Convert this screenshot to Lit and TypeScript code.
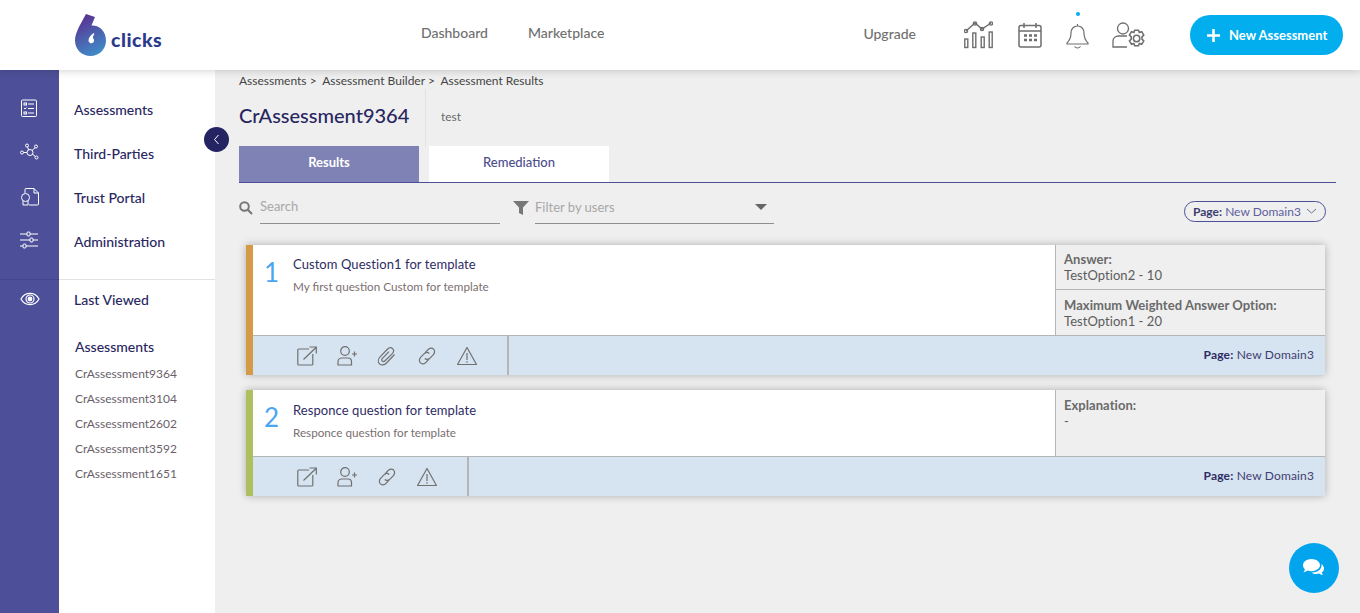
import { LitElement, html, css, svg } from 'lit';
import { customElement } from 'lit/decorators.js';

const ic = (w: number, h: number, body: unknown, sw = 1.2) => html`<svg width=${w} height=${h} viewBox="0 0 ${w} ${h}" fill="none" stroke="currentColor" stroke-width=${sw}>${body}</svg>`;

const ICONS = {
  open: ic(20, 20, svg`<path d="M12 3H1.800a1 1 0 0 0-1 1v14a1 1 0 0 0 1 1h13a1 1 0 0 0 1-1V8"/><path d="M6.500 13.500L19 1.500M12.500 1h6.800v6.500"/>`),
  user: ic(20, 20, svg`<circle cx="8" cy="5" r="4.300"/><path d="M1 19v-3.500c0-2 2-3.500 4-3.500h6c2 0 3.500 1.500 3.500 3.500V19z"/><path d="M15 8h5M17.500 5.500v5"/>`),
  clip: ic(20, 20, svg`<path d="M17.500 8.500L9.500 17c-2.200 2.300-5.300 2.500-7 .8s-1.500-4.800.6-7l7.500-7.800c1.500-1.500 3.700-1.700 5-.4s1.200 3.400-.3 5L8 14.800c-.8.800-2 .9-2.700.2s-.6-1.900.2-2.700l6.500-6.700"/>`),
  link: ic(20, 20, svg`<path d="M8 7l3-3.300c1.700-1.800 4.200-2 5.600-.6 1.500 1.500 1.300 4-.4 5.700l-3.200 3.300c-1.700 1.700-3.900 1.700-5.200.4"/><path d="M12 13l-3 3.300c-1.700 1.800-4.200 2-5.600.6-1.500-1.500-1.300-4 .4-5.700l3.200-3.300c1.700-1.700 3.900-1.700 5.200-.4"/>`),
  warn: ic(20, 20, svg`<path d="M10 1.500L19.500 18.500H.5z" stroke-linejoin="round"/><path d="M10 7v7M10 15.200v1.500"/>`),
};

const rail = [
  svg`<rect x="1.500" y="1" width="15" height="16.500" rx="1"/><rect x="4" y="4" width="2.500" height="2"/><path d="M8 5h6M4 9l1 1 1.500-1.500M8 9.500h6M8 14h6"/><rect x="4" y="13" width="2.500" height="2"/>`,
  svg`<circle cx="10" cy="9.500" r="3"/><circle cx="2" cy="9.500" r="1.500"/><circle cx="7" cy="2.500" r="1.500"/><circle cx="16" cy="3.500" r="1.500"/><circle cx="16.500" cy="14.500" r="1.500"/><path d="M3.500 9.500H7M7.500 4l1.200 3M15 4.700l-3 2.800M15.500 13.500l-3.200-2.300"/>`,
  svg`<path d="M5 6V2.500a1 1 0 0 1 1-1h8l4.500 4.500v11a1 1 0 0 1-1 1H9M14 1.500V6h4.500"/><circle cx="5.500" cy="10.500" r="4"/><path d="M3 14v4h5v-4"/>`,
  svg`<path d="M0 3h7M10 3h8M0 9h10M13 9h5M0 15h3M6 15h12"/><rect x="7" y="1" width="3" height="4" rx="1"/><rect x="10" y="7" width="3" height="4" rx="1"/><rect x="3" y="13" width="3" height="4" rx="1"/>`,
];

const RECENT = ['CrAssessment9364', 'CrAssessment3104', 'CrAssessment2602', 'CrAssessment3592', 'CrAssessment1651'];

interface Row { label: string; value: string }
interface Question {
  n: number; color: string; title: string; sub: string; tall: boolean;
  icons: (keyof typeof ICONS)[]; rows: Row[];
}

const QUESTIONS: Question[] = [
  {
    n: 1, color: '#d49a45', title: 'Custom Question1 for template', sub: 'My first question Custom for template', tall: true,
    icons: ['open', 'user', 'clip', 'link', 'warn'],
    rows: [
      { label: 'Answer:', value: 'TestOption2 - 10' },
      { label: 'Maximum Weighted Answer Option:', value: 'TestOption1 - 20' },
    ],
  },
  {
    n: 2, color: '#aebf5f', title: 'Responce question for template', sub: 'Responce question for template', tall: false,
    icons: ['open', 'user', 'link', 'warn'],
    rows: [{ label: 'Explanation:', value: '-' }],
  },
];

@customElement('app-root')
export class AppRoot extends LitElement {
  static styles = css`
    :host {
      display: block;
      height: 613px;
      overflow: hidden;
      position: relative;
      background: #efefef;
      font-family: Lato, sans-serif;
      color: #28265f;
    }
    .top {
      height: 70px;
      background: #fff;
      box-shadow: 0 1px 8px rgba(0, 0, 0, 0.18);
      display: flex;
      align-items: center;
      position: relative;
      z-index: 2;
    }
    .logo { margin-left: 75px; width: 346px; display: flex; align-items: center; gap: 4px; height: 44px; }
    .logo-word { font-size: 19.500px; font-weight: 900; color: #2c3a8c; margin-top: 9px; letter-spacing: 0.5px; }
    .top a { font-size: 14px; font-weight: 500; color: #6f6f6f; margin-bottom: 6px; }
    .top a.market { margin-left: 40px; }
    .top a.upgrade { margin-left: 259px; margin-bottom: 3px; }
    .top-icons { display: flex; align-items: center; margin-left: 48px; color: #6e6e6e; }
    .top-icons svg { display: block; }
    .gap-cal { width: 25px; }
    .gap-bell { width: 24px; }
    .gap-user { width: 23px; }
    .bell { position: relative; }
    .bell::before {
      content: '';
      position: absolute;
      left: 10px;
      top: -10px;
      width: 4px;
      height: 4px;
      border-radius: 50%;
      background: #03aeef;
    }
    .new {
      margin-left: 44px;
      width: 153px;
      height: 40px;
      border-radius: 20px;
      background: #03aeef;
      color: #fff;
      font-size: 13px;
      font-weight: 700;
      display: flex;
      align-items: center;
      padding-left: 17px;
      gap: 9px;
      box-sizing: border-box;
    }
    .body { display: flex; height: 543px; }
    .rail { width: 59px; background: #4d5098; color: #fff; flex: none; }
    .rail-item { height: 44px; display: flex; align-items: center; justify-content: center; }
    .rail-list { padding-top: 16px; }
    .rail-sep { height: 1px; background: #44468b; margin-top: 17px; }
    .rail-eye { height: 37px; }
    .nav { width: 156px; background: #fff; flex: none; position: relative; }
    .nav-list { padding-top: 18px; }
    .nav-item { height: 44px; line-height: 44px; padding-left: 15px; font-size: 14px; font-weight: 500; color: #28265f; }
    .nav-sep { height: 1px; background: #e2e2e2; margin-top: 15px; }
    .last { height: 39px; line-height: 39px; }
    .recent-head { padding-left: 16px; font-size: 14px; font-weight: 500; margin-top: 17px; line-height: 22px; }
    .recent { padding-left: 16px; font-size: 12px; color: #6b5f6b; line-height: 25px; padding-top: 3px; }
    .collapse {
      position: absolute;
      left: 145px;
      top: 57px;
      width: 25px;
      height: 25px;
      border-radius: 50%;
      background: #242463;
      color: #fff;
      display: flex;
      align-items: center;
      justify-content: center;
      z-index: 1;
    }
    .main { flex: 1; padding: 3px 24px 0 24px; min-width: 0; }
    .crumbs { font-size: 12px; line-height: 16px; color: #444; display: flex; gap: 2.500px; }
    .crumbs span { white-space: pre; }
    .head { display: flex; height: 57px; align-items: center; }
    .title { font-size: 20px; width: 186px; height: 57px; line-height: 53px; border-right: 1px solid #e2e2e2; color: #28265f; font-weight: 500; }
    .desc { font-size: 12px; color: #6a6a6a; padding-left: 15px; margin-bottom: 2px; }
    .tabs { display: flex; gap: 10px; border-bottom: 1px solid #4d5098; height: 36px; width: 1097px; }
    .tab { width: 180px; height: 36px; line-height: 33px; text-align: center; font-size: 13px; background: #fff; color: #4d4d8e; font-weight: 500; }
    .tab.on { background: #7f82b4; color: #fff; font-weight: 700; }
    .filters { display: flex; align-items: flex-start; height: 42px; width: 1087px; padding-top: 8px; }
    .search { display: flex; align-items: center; width: 261px; color: #777; }
    .search svg { flex: none; }
    .field { font-size: 13px; color: #a7a7a7; border-bottom: 1px solid #8f8f8f; height: 33px; line-height: 30px; box-sizing: border-box; margin-left: 7px; flex: 1; }
    .flt { display: flex; align-items: center; width: 261px; margin-left: 13px; color: #777; }
    .flt .field { margin-left: 6px; display: flex; justify-content: space-between; align-items: center; padding-right: 7px; }
    .caret { width: 0; height: 0; border-left: 6px solid transparent; border-right: 6px solid transparent; border-top: 6px solid #666; }
    .pill {
      margin-left: auto;
      margin-top: 10px;
      height: 21px;
      box-sizing: border-box;
      border: 1px solid #4d5098;
      border-radius: 11px;
      display: flex;
      align-items: center;
      gap: 5px;
      padding: 0 7px 1px 8px;
      font-size: 12px;
      color: #5e5f9e;
      width: 142px;
      white-space: nowrap;
    }
    .pill b { color: #3d3d70; }
    .cards { padding-left: 7px; padding-top: 12px; width: 1079px; }
    .card { display: flex; flex-direction: column; border-left: 7px solid; box-shadow: 0 0 8px rgba(0, 0, 0, 0.28); margin-bottom: 15px; background: #fff; }
    .card-top { display: flex; height: 90px; }
    .card.short .card-top { height: 66px; }
    .q { flex: 1; background: #fff; display: flex; min-width: 0; }
    .num { width: 40px; font-size: 26px; color: #4aa5f2; padding-left: 11px; box-sizing: border-box; line-height: 30px; padding-top: 12px; }
    .q-text { padding-top: 10px; }
    .short .q-text { padding-top: 11px; }
    .q-title { font-size: 13px; line-height: 18px; color: #2e2c64; letter-spacing: 0.07px; }
    .q-sub { font-size: 11.700px; line-height: 18px; margin-top: 4px; color: #7a6f70; }
    .side { width: 270px; background: #efefef; border-left: 1px solid #b5b5b5; box-sizing: border-box; display: flex; flex-direction: column; }
    .side-row { flex: 1; padding: 6px 8px 0; font-size: 13px; line-height: 16px; color: #5c5c5c; letter-spacing: 0.05px; }
    .side-row:first-child:not(:last-child) { flex: none; height: 44px; box-sizing: border-box; }
    .short .side-row { padding-top: 7px; }
    .side-row + .side-row { border-top: 1px solid #b5b5b5; padding-top: 7px; }
    .side-row b { color: #6a6a6a; display: block; }
    .card-bar { height: 40px; box-sizing: border-box; border-top: 1px solid #b5b5b5; background: #d6e3f0; display: flex; align-items: stretch; }
    .tools { display: flex; align-items: center; gap: 20px; padding: 0 30px 0 44px; border-right: 2px solid #b5b5b5; color: #707070; }
    .tools svg { display: block; }
    .page { margin-left: auto; align-self: center; font-size: 12px; padding: 0 11px 2px 0; color: #3f3f72; letter-spacing: 0.15px; }
    .page b { color: #2e2c64; }
    .chat {
      position: absolute;
      right: 21px;
      bottom: 20px;
      width: 50px;
      height: 50px;
      border-radius: 50%;
      background: #03a4ee;
      display: flex;
      align-items: center;
      justify-content: center;
    }
  `;

  render() {
    return html`
      <div class="top">
        <div class="logo">
          <svg width="32" height="44" viewBox="0 0 32 44">
            <defs>
              <linearGradient id="lg" x1="0.3" y1="0" x2="0.7" y2="1">
                <stop offset="0" stop-color="#5a2f90" />
                <stop offset="1" stop-color="#3f8fca" />
              </linearGradient>
            </defs>
            <path fill="url(#lg)" d="M11 1L20 4 16.500 12.500C24 12 31 18 31 27.500C31 36.500 24 43 15.500 43C7 43 0 36.500 0 27.500C0 22 3 16 5 12z" />
            <path fill="#fff" d="M18 20.500C15 23 13.500 25 13.500 27.500a2.800 2.800 0 1 0 5-1.800c-1-1-.5-2.700.5-4a.7.7 0 0 0-1-1.200z" />
          </svg>
          <span class="logo-word">clicks</span>
        </div>
        <a>Dashboard</a>
        <a class="market">Marketplace</a>
        <a class="upgrade">Upgrade</a>
        <div class="top-icons">
          ${ic(29, 28, svg`<path d="M2 10l9-8 7 6 9-6"/><circle cx="2" cy="10" r="1.600"/><circle cx="11" cy="2.500" r="1.600"/><circle cx="18" cy="8" r="1.600"/><circle cx="27" cy="2.500" r="1.600"/><rect x=".8" y="18" width="3" height="8.500"/><rect x="8.800" y="12" width="3" height="14.500"/><rect x="17.200" y="16" width="3" height="10.500"/><rect x="25.200" y="11" width="3" height="15.500"/>`, 1.4)}
          <span class="gap-cal"></span>
          ${ic(24, 26, svg`<rect x="1" y="3.500" width="22" height="21.500" rx="2" stroke-width="1.500"/><path d="M1 9h22M6 1v5M18 1v5" stroke-width="1.500"/><path d="M6 13.500h3M11 13.500h3M16 13.500h3M6 18h3M11 18h3M16 18h3" stroke-width="2.400"/>`)}
          <span class="gap-bell"></span>
          <span class="bell">${ic(23, 27, svg`<path d="M11.500 4c-4 0-6.500 3-6.500 7 0 6-2 8-4 10v1h21v-1c-2-2-4-4-4-10 0-4-2.500-7-6.500-7zM11.500 4V2M8.500 24.500c1.500 2 4.500 2 6 0"/>`)}</span>
          <span class="gap-user"></span>
          ${ic(34, 27, svg`<circle cx="11" cy="6.500" r="5.500" stroke-width="1.300"/><path d="M15 14H6.500C3.500 14 1 16 1 19v6h14" stroke-width="1.300"/><g transform="translate(24.600 16.500) scale(1.280) translate(-25 -18)"><circle cx="25" cy="18" r="2.500"/><path d="M23.500 11.500h3l.6 1.800 1.900-.6 1.600 2.600-1.400 1.400v1.800l1.400 1.400-1.600 2.600-1.900-.6-.6 1.800h-3l-.6-1.800-1.900.6-1.600-2.600 1.400-1.400v-1.800l-1.400-1.400 1.600-2.600 1.900.6z"/></g>`)}
        </div>
        <div class="new">
          <svg width="13" height="13" viewBox="0 0 13 13" fill="#fff"><path d="M5.200 0h2.600v5.200H13v2.600H7.800V13H5.200V7.800H0V5.200h5.200z" /></svg>
          <span>New Assessment</span>
        </div>
      </div>
      <div class="body">
        <div class="rail">
          <div class="rail-list">
            ${rail.map((r) => html`<div class="rail-item">${ic(19, 19, r, 1)}</div>`)}
          </div>
          <div class="rail-sep"></div>
          <div class="rail-item rail-eye">
            ${ic(20, 14, svg`<path d="M1 7c4-7.500 14-7.500 18 0-4 7.500-14 7.500-18 0z"/><circle cx="10" cy="7" r="4"/><circle cx="10" cy="7" r="1.800" fill="currentColor"/>`)}
          </div>
        </div>
        <div class="nav">
          <div class="collapse">
            <svg width="7" height="11" viewBox="0 0 7 11" fill="none" stroke="#fff" stroke-width="1"><path d="M5.500 1L1.500 5.500l4 4.500" /></svg>
          </div>
          <div class="nav-list">
            ${['Assessments', 'Third-Parties', 'Trust Portal', 'Administration'].map((n) => html`<div class="nav-item">${n}</div>`)}
          </div>
          <div class="nav-sep"></div>
          <div class="nav-item last">Last Viewed</div>
          <div class="recent-head">Assessments</div>
          <div class="recent">${RECENT.map((r) => html`<div>${r}</div>`)}</div>
        </div>
        <div class="main">
          <div class="crumbs">
            <span>Assessments &gt; </span><span>Assessment Builder &gt; </span><span>Assessment Results</span>
          </div>
          <div class="head">
            <div class="title">CrAssessment9364</div>
            <div class="desc">test</div>
          </div>
          <div class="tabs">
            <div class="tab on">Results</div>
            <div class="tab">Remediation</div>
          </div>
          <div class="filters">
            <div class="search">
              <svg width="14" height="14" viewBox="0 0 14 14" fill="none" stroke="#777" stroke-width="2"><circle cx="5.500" cy="5.500" r="4.300" /><path d="M8.800 8.800L13 13" /></svg>
              <div class="field">Search</div>
            </div>
            <div class="flt">
              <svg width="16" height="14" viewBox="0 0 16 14" fill="#777"><path d="M0 0h16L10 6.500V14L6 12V6.500z" /></svg>
              <div class="field"><span>Filter by users</span><span class="caret"></span></div>
            </div>
            <div class="pill"><span><b>Page:</b> New Domain3</span>
              <svg width="11" height="6" viewBox="0 0 11 6" fill="none" stroke="#6d6d9f"><path d="M1 1l4.500 4L10 1" /></svg>
            </div>
          </div>
          <div class="cards">
            ${QUESTIONS.map((q) => html`
              <div class="card ${q.tall ? '' : 'short'}" style="border-left-color:${q.color}">
                <div class="card-top">
                  <div class="q">
                    <div class="num">${q.n}</div>
                    <div class="q-text">
                      <div class="q-title">${q.title}</div>
                      <div class="q-sub">${q.sub}</div>
                    </div>
                  </div>
                  <div class="side">
                    ${q.rows.map((r) => html`<div class="side-row"><b>${r.label}</b>${r.value}</div>`)}
                  </div>
                </div>
                <div class="card-bar">
                  <div class="tools">${q.icons.map((i) => ICONS[i])}</div>
                  <div class="page"><b>Page:</b> New Domain3</div>
                </div>
              </div>
            `)}
          </div>
        </div>
      </div>
      <div class="chat">
        <svg width="22" height="18" viewBox="0 0 22 18" fill="#fff">
          <path d="M8.500 0C3.800 0 0 2.800 0 6.300c0 1.600.8 3 2 4.100-.3 1.200-1.100 2.200-1.700 2.800 1.700-.1 3.300-.8 4.400-1.600 1.200.4 2.500.6 3.800.6 4.700 0 8.500-2.800 8.500-5.900C17 2.800 13.200 0 8.500 0z" />
          <path d="M18.200 5c.3.500.3 1 .3 1.500 0 3.800-4 7-9 7h-1c1.400 1 3.200 1.500 5 1.500 1 0 1.800-.1 2.600-.4 1 .8 2.500 1.400 4.200 1.500-.5-.6-1.300-1.500-1.500-2.600 1.300-1 2.200-2.400 2.200-4 0-1.900-1.100-3.500-2.800-4.500z" />
        </svg>
      </div>
    `;
  }
}
